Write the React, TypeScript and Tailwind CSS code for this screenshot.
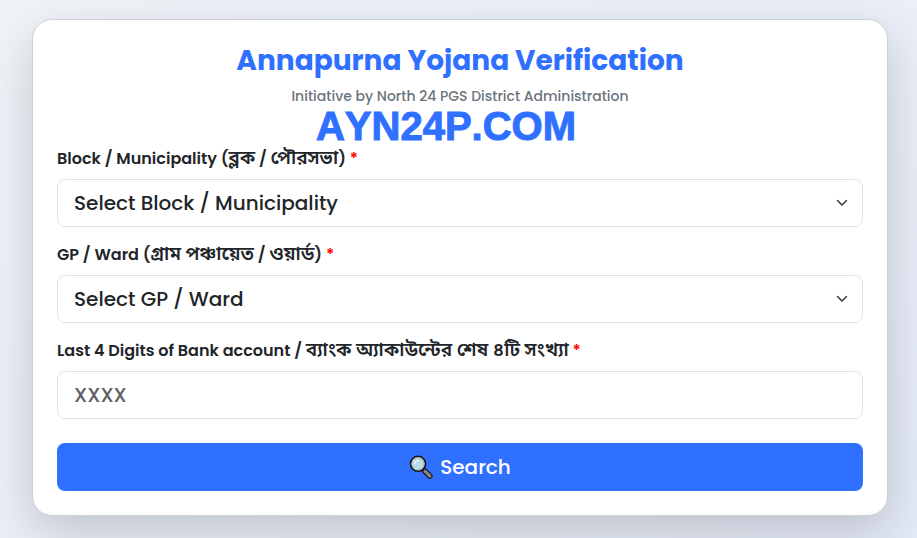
import { useState } from 'react';
import type { ReactNode } from 'react';

interface FieldProps {
  id: string;
  label: ReactNode;
  children: ReactNode;
}

function Field({ id, label, children }: FieldProps) {
  return (
    <div className="mb-4">
      <label htmlFor={id} className="mb-2 block h-6 text-base leading-6 font-semibold whitespace-nowrap">
        {label} <span className="text-[#f00]">*</span>
      </label>
      {children}
    </div>
  );
}

// Bengali glyphs run small next to Poppins
function Bn({ children }: { children: string }) {
  return <span className="text-[19px] leading-none">{children}</span>;
}

interface SelectProps {
  id: string;
  placeholder: string;
}

function Select({ id, placeholder }: SelectProps) {
  return (
    <div className="relative">
      <select
        id={id}
        defaultValue=""
        className="h-12 w-full appearance-none rounded-lg border border-[#dee2e6] bg-white pr-12 pl-4 text-xl focus:border-blue-400 focus:outline-none"
      >
        <option value="">{placeholder}</option>
      </select>
      <svg
        viewBox="0 0 16 16"
        className="pointer-events-none absolute top-4 right-3 h-4 w-4"
        fill="none"
        stroke="#343a40"
        strokeWidth="1.5"
        strokeLinecap="round"
        strokeLinejoin="round"
      >
        <path d="m2.5 5.5 4.5 4.5 4.5-4.5" />
      </svg>
    </div>
  );
}

function SearchIcon() {
  return (
    <svg viewBox="0 0 24 24" className="h-6 w-6" aria-hidden="true">
      <path d="M13.5 14l2 2" stroke="#161616" strokeWidth="3" strokeLinecap="round" />
      <path d="M16 16.2l4.8 4.8" stroke="#161616" strokeWidth="5.6" strokeLinecap="round" />
      <path d="M16 16.2l4.8 4.8" stroke="#8a8583" strokeWidth="3.2" strokeLinecap="round" />
      <circle cx="9" cy="8.8" r="7.4" fill="#b5dfea" stroke="#161616" strokeWidth="1.8" />
      <circle cx="9" cy="8.8" r="6.1" fill="none" stroke="#b0b5b8" strokeWidth="1.2" />
      <path d="M5.8 8.5a3.6 3.6 0 0 1 3-3" fill="none" stroke="#e3f6fb" strokeWidth="1.4" strokeLinecap="round" />
    </svg>
  );
}

export default function App() {
  const [digits, setDigits] = useState('');

  return (
    <div className="min-h-screen bg-linear-to-br from-[#f0f4f9] to-[#e3e9f6] pt-[19px] pr-[29px] pb-[22px] pl-8 font-[Poppins,Inter,'Noto_Sans_Bengali','Noto_Sans',sans-serif] font-medium text-[#212529]">
      <main className="rounded-[20px] border border-[#cdd0d4] bg-white p-6 shadow-[0_16px_48px_rgba(0,0,0,0.175)]">
        <header className="mb-px text-center">
          <h1 className="text-[28px] leading-[34px] font-bold text-[#2f70ff]">Annapurna Yojana Verification</h1>
          <p className="mt-2 text-sm leading-5 text-[#6c757d]">Initiative by North 24 PGS District Administration</p>
          <p className="pr-7 font-['Liberation_Sans',Arial,sans-serif] text-[40px] leading-10 font-bold text-[#2f70ff] [-webkit-text-stroke:1px_#2f70ff] [font-kerning:none]">
            AYN24P.COM
          </p>
        </header>

        <form onSubmit={(e) => e.preventDefault()}>
          <Field
            id="block"
            label={
              <>
                Block / Municipality (<Bn>ব্লক</Bn> / <Bn>পৌরসভা</Bn>)
              </>
            }
          >
            <Select id="block" placeholder="Select Block / Municipality" />
          </Field>
          <Field
            id="ward"
            label={
              <>
                GP / Ward (<Bn>গ্রাম পঞ্চায়েত</Bn> / <Bn>ওয়ার্ড</Bn>)
              </>
            }
          >
            <Select id="ward" placeholder="Select GP / Ward" />
          </Field>
          <Field
            id="digits"
            label={
              <>
                Last 4 Digits of Bank account / <Bn>ব্যাংক অ্যাকাউন্টের শেষ ৪টি সংখ্যা</Bn>
              </>
            }
          >
            <input
              id="digits"
              type="text"
              inputMode="numeric"
              maxLength={4}
              placeholder="XXXX"
              value={digits}
              onChange={(e) => setDigits(e.target.value)}
              className="h-12 w-full rounded-lg border border-[#dee2e6] bg-white px-4 text-xl placeholder:text-[#5d6165] focus:border-blue-400 focus:outline-none"
            />
          </Field>
          <button
            type="submit"
            className="mt-6 flex h-12 w-full items-center justify-center gap-[7px] rounded-lg bg-[#2f70ff] text-xl text-white hover:bg-[#1f60ef]"
          >
            <SearchIcon />
            Search
          </button>
        </form>
      </main>
    </div>
  );
}
